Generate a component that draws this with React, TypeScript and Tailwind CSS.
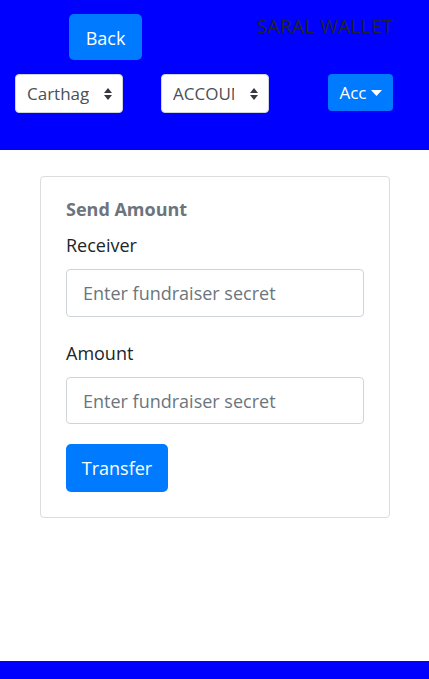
import React from "react";

const Arrows = () => (
    <svg width="8" height="12" viewBox="0 0 8 12" className="shrink-0">
        <path d="M4 0 L8 5 L0 5 Z" fill="#343a40" />
        <path d="M0 7 L8 7 L4 12 Z" fill="#343a40" />
    </svg>
)

const App = () => {
    return (
        <div className="flex flex-col min-h-[679px] bg-white text-[#212529]" style={{ fontFamily: '"Open Sans", "Noto Sans", sans-serif' }}>
            <header className="h-[150px] bg-[#0000ff] shrink-0">
                <div className="flex items-start pt-[14px]">
                    <button className="ml-[69px] w-[73px] h-[46px] pt-[3px] rounded-[5px] bg-[#007bff] text-white text-[18px]">Back</button>
                    <span className="ml-auto mr-[36px] -mt-[1px] text-[19px] leading-[27px] tracking-[0.4px] text-[#212529]">SARAL WALLET</span>
                </div>
                <div className="flex items-start mt-[14px]">
                    <div className="ml-[15px] w-[108px] h-[39px] bg-white rounded-[4px] border border-[#ced4da] flex items-center pl-[11px] pr-[10px]">
                        <span className="text-[17px] text-[#495057] overflow-hidden whitespace-nowrap w-[62px]">Carthage</span>
                        <span className="ml-auto"><Arrows /></span>
                    </div>
                    <div className="ml-[38px] w-[108px] h-[39px] bg-white rounded-[4px] border border-[#ced4da] flex items-center pl-[11px] pr-[10px]">
                        <span className="text-[17px] text-[#495057] overflow-hidden whitespace-nowrap w-[61px]">ACCOUNT</span>
                        <span className="ml-auto"><Arrows /></span>
                    </div>
                    <button className="ml-auto mr-[36px] w-[65px] h-[37px] rounded-[4px] bg-[#007bff] text-white text-[17px] flex items-center justify-center gap-[4px]">
                        Acc
                        <svg width="11" height="6" viewBox="0 0 11 6"><path d="M0 0 L11 0 L5.5 6 Z" fill="white" /></svg>
                    </button>
                </div>
            </header>

            <main className="flex-1 pt-[26px]">
                <div className="ml-[40px] w-[350px] border border-[#dcdcdc] rounded-[4px] px-[25px] pt-[20px] pb-[25px]">
                    <h5 className="text-[18px] font-bold text-[#6c757d] leading-[24px]">Send Amount</h5>
                    <label className="block mt-[12px] text-[18px] leading-[24px]">Receiver</label>
                    <input className="mt-[12px] w-full h-[48px] border border-[#ced4da] rounded-[4px] px-[16px] text-[18px] placeholder-[#6c757d] outline-none" placeholder="Enter fundraiser secret" />
                    <label className="block mt-[24px] text-[18px] leading-[24px]">Amount</label>
                    <input className="mt-[12px] w-full h-[47px] border border-[#ced4da] rounded-[4px] px-[16px] text-[18px] placeholder-[#6c757d] outline-none" placeholder="Enter fundraiser secret" />
                    <button className="mt-[20px] w-[102px] h-[48px] rounded-[5px] bg-[#007bff] text-white text-[18px]">Transfer</button>
                </div>
            </main>

            <footer className="h-[18px] bg-[#0000ff] shrink-0" />
        </div>
    )
}
export default App
